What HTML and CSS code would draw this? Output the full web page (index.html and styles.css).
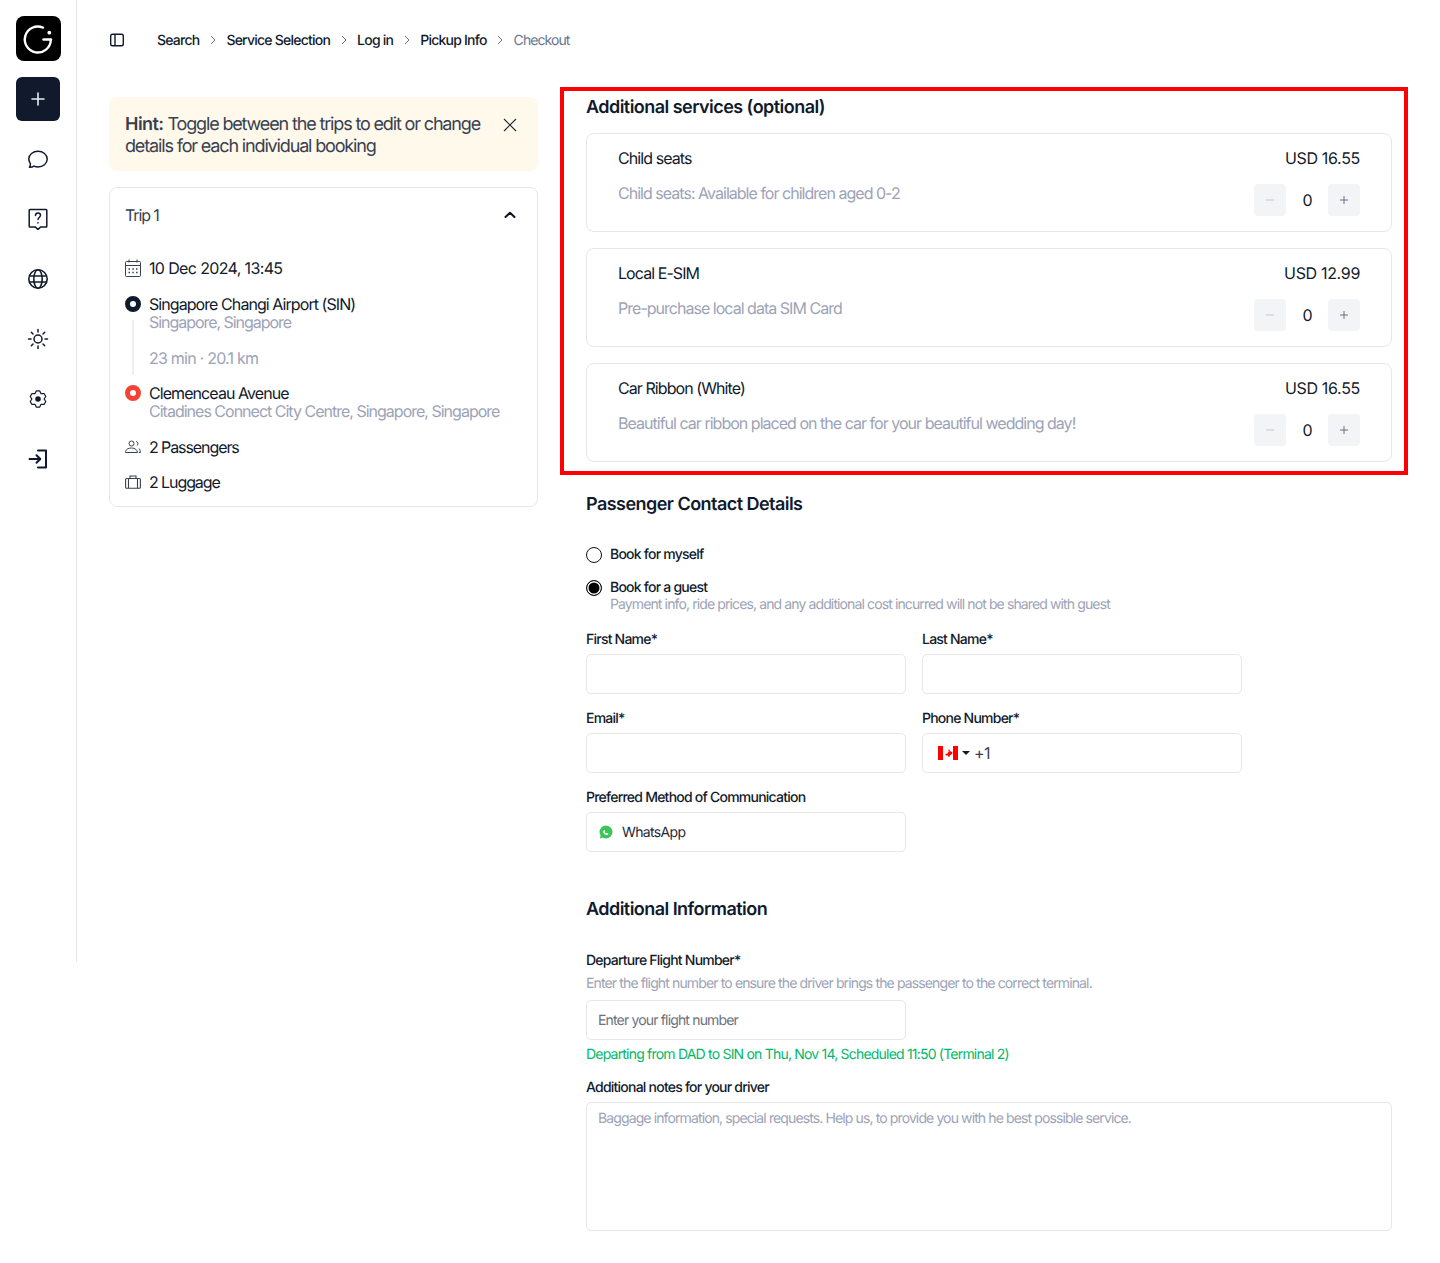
FILE: index.html
```html
<!DOCTYPE html>
<html lang="en">
<head>
<meta charset="utf-8">
<title>Checkout</title>
<link rel="stylesheet" href="styles.css">
</head>
<body>
<div class="app">
  <aside class="sidebar">
    <div class="logo"><svg width="45" height="45" viewBox="0 0 45 45" fill="none" stroke="#fff" stroke-linecap="round"><path d="M27 11.600A13 13 0 1 0 34.800 24" stroke-width="2.400"/><path d="M27.500 23.500H35" stroke-width="2.400"/><circle cx="33.300" cy="16.700" r="1.900" fill="#fff" stroke="none"/></svg></div>
    <div class="add"><svg width="16" height="16" viewBox="0 0 16 16" fill="none" stroke="#e8eaee" stroke-width="1.600" stroke-linecap="round"><path d="M8 2v12M2 8h12"/></svg></div>
    <div class="nav-icon"><svg width="22" height="22" viewBox="0 0 22 22" fill="none" stroke="#111a2c" stroke-width="1.500" stroke-linejoin="round"><path transform="translate(0 1)" d="M11 2.300c5 0 9.200 3.200 9.200 7.700 0 4.700-4.200 7.900-9.200 7.900-1.400 0-2.800-.3-4-.8-1.200.8-3 1.100-4.600 1.200.7-1.100 1.100-2.200 1-3.400C2.800 13.500 1.800 11.800 1.800 10c0-4.500 4.200-7.700 9.200-7.700z"/></svg></div>
    <div class="nav-icon"><svg width="22" height="22" viewBox="0 0 22 22" fill="none" stroke="#111a2c" stroke-width="1.500" stroke-linejoin="round" stroke-linecap="round"><path d="M3 1.500h16a.8.8 0 0 1 .8.8v16a.8.8 0 0 1-.8.8h-5.500L11 21.500l-2.500-2.400H3a.8.8 0 0 1-.8-.8v-16a.8.8 0 0 1 .8-.8z"/><path d="M8.500 7.500c0-1.500 1.100-2.500 2.500-2.500s2.500 1 2.500 2.300c0 2-2.500 2.300-2.500 4.200"/><path d="M11 14.800v.2"/></svg></div>
    <div class="nav-icon"><svg width="22" height="22" viewBox="0 0 22 22" fill="none" stroke="#111a2c" stroke-width="1.600"><circle cx="11" cy="11" r="9.200"/><ellipse cx="11" cy="11" rx="4.200" ry="9.200"/><path d="M2.300 8h17.400M2.300 14h17.400"/></svg></div>
    <div class="nav-icon"><svg width="22" height="22" viewBox="0 0 22 22" fill="none" stroke="#111a2c" stroke-width="1.500" stroke-linecap="round"><circle cx="11" cy="11" r="4"/><path d="M11 1.500v2.500M11 18v2.500M1.500 11H4M18 11h2.500M4.300 4.300 6 6M16 16l1.700 1.700M4.300 17.700 6 16M16 6l1.700-1.700"/></svg></div>
    <div class="nav-icon"><svg width="18" height="18" viewBox="0 0 22 22" fill="none" stroke="#111a2c" stroke-width="1.500" stroke-linejoin="round"><path d="M8.900 1.200h4.200l1.650 3.300 3.650-.2 2.100 3.600L18.500 11l2 3.100-2.100 3.600-3.650-.2-1.650 3.300H8.900l-1.650-3.300-3.650.2-2.100-3.600L3.500 11l-2-3.100 2.100-3.600 3.650.2z"/><circle cx="11" cy="11" r="3.400" fill="#111a2c" stroke="none"/></svg></div>
    <div class="nav-icon"><svg width="22" height="22" viewBox="0 0 22 22" fill="none" stroke="#111a2c" stroke-width="2" stroke-linecap="round" stroke-linejoin="round"><path d="M11 2.500h8v17h-8"/><path d="M2.500 11h10.500M9.500 7.200 13.300 11l-3.800 3.800"/></svg></div>
  </aside>

  <div class="main">
    <header class="topbar">
      <svg class="panel-icon" width="16" height="16" viewBox="0 0 16 16" fill="none" stroke="#111a2c" stroke-width="1.400"><rect x="1.700" y="2.200" width="12.600" height="11.600" rx="1.800"/><path d="M6 2.200v11.600"/></svg>
      <nav class="crumbs">
        <span>Search</span><svg class="sep" width="8" height="10" viewBox="0 0 8 10" fill="none" stroke="#6b7280" stroke-width="1"><path d="M2 1l4 4-4 4"/></svg>
        <span>Service Selection</span><svg class="sep" width="8" height="10" viewBox="0 0 8 10" fill="none" stroke="#6b7280" stroke-width="1"><path d="M2 1l4 4-4 4"/></svg>
        <span>Log in</span><svg class="sep" width="8" height="10" viewBox="0 0 8 10" fill="none" stroke="#6b7280" stroke-width="1"><path d="M2 1l4 4-4 4"/></svg>
        <span>Pickup Info</span><svg class="sep" width="8" height="10" viewBox="0 0 8 10" fill="none" stroke="#6b7280" stroke-width="1"><path d="M2 1l4 4-4 4"/></svg>
        <span class="current">Checkout</span>
      </nav>
    </header>

    <div class="columns">
      <div class="left">
        <div class="hint">
          <p><b>Hint:</b> Toggle between the trips to edit or change details for each individual booking</p>
          <svg class="hint-close" width="14" height="14" viewBox="0 0 14 14" fill="none" stroke="#1f2937" stroke-width="1.100"><path d="M1 1l12 12M13 1L1 13"/></svg>
        </div>
        <section class="trip">
          <div class="trip-head">
            <span>Trip 1</span>
            <svg width="12" height="8" viewBox="0 0 12 8" fill="none" stroke="#0b1222" stroke-width="2" stroke-linecap="round" stroke-linejoin="round"><path d="M1.500 6 6 1.800 10.500 6"/></svg>
          </div>
          <div class="row date">
            <svg width="16" height="18" viewBox="0 0 16 18" fill="none" stroke="#374151" stroke-width="1"><rect x=".5" y="2.500" width="15" height="15" rx="1"/><path d="M.5 6.500h15M4 .5v3M12 .5v3"/><path d="M3.500 10h1.500M7.300 10h1.500M11 10h1.500M3.500 13.500h1.500M7.300 13.500h1.500M11 13.500h1.500" stroke-width="1.300"/></svg>
            <span>10 Dec 2024, 13:45</span>
          </div>
          <div class="stop from">
            <i class="dot dark"></i>
            <div><div class="place">Singapore Changi Airport (SIN)</div><div class="sub">Singapore, Singapore</div></div>
          </div>
          <div class="leg"><span class="sub">23 min · 20.1 km</span></div>
          <div class="stop to">
            <i class="dot red"></i>
            <div><div class="place">Clemenceau Avenue</div><div class="sub">Citadines Connect City Centre, Singapore, Singapore</div></div>
          </div>
          <div class="row pax">
            <svg width="16" height="14" viewBox="0 0 16 14" fill="none" stroke="#374151" stroke-width="1"><circle cx="6.500" cy="3.500" r="2.500"/><path d="M.5 12.500c0-3 2.500-4.500 6-4.500s5.500 1.500 6 4.500z"/><path d="M11 1.500c1.200.3 2 1 2 2.200 0 .8-.5 1.500-1.200 1.900M14 8.500c.8.800 1.300 2 1.400 4h-1.500"/></svg>
            <span>2 Passengers</span>
          </div>
          <div class="row bags">
            <svg width="16" height="14" viewBox="0 0 16 14" fill="none" stroke="#374151" stroke-width="1.100"><rect x=".6" y="3.500" width="14.800" height="9.800" rx="1"/><path d="M3.500 3.500V13M12.500 3.500V13M5 3.500V1h6v2.500"/></svg>
            <span>2 Luggage</span>
          </div>
        </section>
      </div>

      <div class="right">
        <h2 class="h-services">Additional services (optional)</h2>
        <div class="services">
          <article class="service">
            <div class="service-text"><div class="s-name">Child seats</div><div class="s-desc">Child seats: Available for children aged 0-2</div></div>
            <div class="service-side"><div class="price">USD 16.55</div><div class="stepper"><button class="step off" type="button" aria-label="Decrease"><svg width="8" height="8" viewBox="0 0 8 8" stroke="currentColor"><path d="M0 4h8"/></svg></button><span>0</span><button class="step" type="button" aria-label="Increase"><svg width="8" height="8" viewBox="0 0 8 8" stroke="currentColor"><path d="M0 4h8M4 0v8"/></svg></button></div></div>
          </article>
          <article class="service">
            <div class="service-text"><div class="s-name">Local E-SIM</div><div class="s-desc">Pre-purchase local data SIM Card</div></div>
            <div class="service-side"><div class="price">USD 12.99</div><div class="stepper"><button class="step off" type="button" aria-label="Decrease"><svg width="8" height="8" viewBox="0 0 8 8" stroke="currentColor"><path d="M0 4h8"/></svg></button><span>0</span><button class="step" type="button" aria-label="Increase"><svg width="8" height="8" viewBox="0 0 8 8" stroke="currentColor"><path d="M0 4h8M4 0v8"/></svg></button></div></div>
          </article>
          <article class="service">
            <div class="service-text"><div class="s-name">Car Ribbon (White)</div><div class="s-desc">Beautiful car ribbon placed on the car for your beautiful wedding day!</div></div>
            <div class="service-side"><div class="price">USD 16.55</div><div class="stepper"><button class="step off" type="button" aria-label="Decrease"><svg width="8" height="8" viewBox="0 0 8 8" stroke="currentColor"><path d="M0 4h8"/></svg></button><span>0</span><button class="step" type="button" aria-label="Increase"><svg width="8" height="8" viewBox="0 0 8 8" stroke="currentColor"><path d="M0 4h8M4 0v8"/></svg></button></div></div>
          </article>
        </div>

        <h2 class="h-contact">Passenger Contact Details</h2>
        <label class="radio r1"><i class="radio-mark"></i><span>Book for myself</span></label>
        <label class="radio r2"><i class="radio-mark on"></i><span>Book for a guest</span></label>
        <p class="radio-note">Payment info, ride prices, and any additional cost incurred will not be shared with guest</p>

        <div class="form-grid">
          <div class="field"><div class="label">First Name*</div><div class="input"></div></div>
          <div class="field"><div class="label">Last Name*</div><div class="input"></div></div>
          <div class="field"><div class="label">Email*</div><div class="input"></div></div>
          <div class="field"><div class="label">Phone Number*</div>
            <div class="input phone">
              <svg width="20" height="14" viewBox="0 0 20 14"><rect width="20" height="14" fill="#fff"/><rect width="5" height="14" fill="#f00"/><rect x="15" width="5" height="14" fill="#f00"/><path d="M10 2.500l.9 1.600 1-.4-.3 2 1.300-.8.4 1 1.200-.2-.5 1.400.5.400-2.700 2 .2 1h-2v-1L7.300 9.500l.5-.4-.5-1.400 1.200.2.400-1 1.300.8-.3-2 1 .4z" fill="#f00"/></svg>
              <i class="caret"></i><span>+1</span>
            </div>
          </div>
          <div class="field"><div class="label">Preferred Method of Communication</div>
            <div class="input wa">
              <svg width="14" height="14" viewBox="0 0 14 14"><circle cx="7" cy="7" r="6.500" fill="#3cc45a"/><path d="M.8 13.400l1-3.600 2.500 2.500z" fill="#3cc45a"/><path d="M4.200 7.600c.7 1.300 1.600 2 3 2.500.8.200 2-.3 2.300-1.300L8 8l-.7.600C6.600 8.300 6 7.700 5.700 7l.6-.7-.7-1.600c-1 .3-1.600 1.500-1.400 2.900z" fill="#fff"/></svg>
              <span>WhatsApp</span>
            </div>
          </div>
        </div>

        <h2 class="h-info">Additional Information</h2>
        <div class="label flight-label">Departure Flight Number*</div>
        <p class="help">Enter the flight number to ensure the driver brings the passenger to the correct terminal.</p>
        <div class="input flight"><span>Enter your flight number</span></div>
        <p class="status">Departing from DAD to SIN on Thu, Nov 14, Scheduled 11:50 (Terminal 2)</p>
        <div class="label notes-label">Additional notes for your driver</div>
        <div class="notes">Baggage information, special requests. Help us, to provide you with he best possible service.</div>
      </div>
    </div>
  </div>
</div>
<div class="highlight"></div>
</body>
</html>
```

FILE: styles.css
```css
* { box-sizing: border-box; }
html, body { margin: 0; padding: 0; }
body {
  position: relative;
  height: 1263px;
  overflow: hidden;
  background: #fff;
  color: #111a2c;
  font-family: Inter, "Liberation Sans", sans-serif;
  font-size: 16px;
  letter-spacing: -0.058em;
  text-rendering: geometricPrecision;
}
p, h2 { margin: 0; }
.app { display: flex; align-items: flex-start; }

.sidebar {
  flex: 0 0 77px;
  height: 962px;
  border-right: 1px solid #e5e7eb;
  padding-top: 16px;
  display: flex;
  flex-direction: column;
  align-items: flex-start;
}
.logo { width: 45px; height: 45px; margin-left: 16px; background: #000; border-radius: 8px; }
.logo svg { display: block; }
.add {
  width: 44px; height: 44px; margin: 16px 0 0 16px;
  background: #111a2c; border-radius: 6px;
  display: flex; align-items: center; justify-content: center;
}
.nav-icon {
  width: 44px; height: 60px; margin-left: 16px;
  display: flex; align-items: center; justify-content: center;
}
.add + .nav-icon { margin-top: 8px; }

.main { flex: 1; min-width: 0; padding: 0 48px 0 32px; }
.topbar { height: 80px; display: flex; align-items: center; }
.panel-icon { flex: none; }
.crumbs { margin-left: 32px; padding-top: 2px; display: flex; align-items: center; font-size: 14px; font-weight: 500; line-height: 20px; letter-spacing: -0.055em; color: #111a2c; }
.sep { margin: 0 9.5px 2px; }
.current { color: #6b7691; font-weight: 400; letter-spacing: -0.066em; }

.columns { display: flex; gap: 48px; align-items: flex-start; }
.left { flex: 0 0 429px; padding-top: 17px; }
.right { flex: 1; min-width: 0; padding-top: 17px; }

.hint {
  height: 74px; padding: 17px 20px 0 16px;
  background: #fff9eb; border-radius: 8px;
  display: flex; justify-content: space-between; align-items: flex-start;
}
.hint p { width: 365px; font-size: 18px; line-height: 22px; letter-spacing: -0.064em; color: #374151; }
.hint b { font-weight: 600; letter-spacing: -0.03em; }
.hint-close { margin: 4px 1px 0 0; flex: none; }

.trip {
  margin-top: 16px; height: 320px; padding: 0 15px;
  border: 1px solid #e5e7eb; border-radius: 8px;
  font-size: 16px;
}
.trip-head { height: 54px; display: flex; justify-content: space-between; align-items: center; padding-right: 6px; letter-spacing: -0.07em; color: #374151; }
.row { display: flex; align-items: center; gap: 8px; line-height: 20px; }
.row svg { flex: none; }
.date { margin-top: 16px; letter-spacing: -0.04em; }
.stop { display: flex; gap: 8px; line-height: 18px; }
.from { margin-top: 17px; }
.from .sub { letter-spacing: -0.065em; }
.to { margin-top: 9px; }
.to .sub { letter-spacing: -0.062em; }
.dot { flex: none; width: 16px; height: 16px; margin-top: 1px; border-radius: 50%; background: #fff; border: 5px solid #111a2c; }
.dot.red { border-color: #f44336; }
.sub { color: #9ca3b7; }
.leg { margin: -11px 0 0 7px; padding: 29px 0 7px 15px; border-left: 2px solid #eceef1; line-height: 19px; letter-spacing: -0.048em; }
.pax { margin-top: 17px; letter-spacing: -0.068em; }
.bags { margin-top: 15px; letter-spacing: -0.068em; }

.h-services { font-size: 18px; line-height: 22px; font-weight: 600; letter-spacing: -0.03em; color: #111a2c; }
.services { margin-top: 14px; display: flex; flex-direction: column; gap: 16px; }
.service {
  height: 99px; padding: 14px 31px;
  border: 1px solid #e5e7eb; border-radius: 8px;
  display: flex; justify-content: space-between;
}
.s-name { font-size: 16px; line-height: 20px; }
.s-desc { margin-top: 15px; font-size: 16px; line-height: 20px; letter-spacing: -0.061em; color: #9ca3b7; }
.service-side { display: flex; flex-direction: column; align-items: flex-end; }
.price { font-size: 16px; line-height: 20px; letter-spacing: -0.02em; }
.stepper { margin-top: 16px; display: flex; align-items: center; }
.stepper span { width: 42px; text-align: center; font-size: 16px; }
.step {
  width: 32px; height: 32px; padding: 0; border: 0; border-radius: 4px;
  background: #f3f4f6; color: #6b7280;
  display: flex; align-items: center; justify-content: center;
}
.step.off { color: #c2c6cf; }

.h-contact { margin-top: 33px; font-size: 18px; line-height: 20px; font-weight: 600; letter-spacing: -0.03em; }
.radio { display: flex; align-items: center; gap: 8px; font-size: 14px; font-weight: 500; line-height: 17px; letter-spacing: -0.055em; }
.r1 { margin-top: 31px; }
.r2 { margin-top: 16px; }
.radio-mark { flex: none; width: 16px; height: 16px; border-radius: 50%; border: 1px solid #111; background: #fff; }
.radio-mark.on { background: #000; box-shadow: inset 0 0 0 1.500px #fff; }
.radio-note { margin: 0 0 0 24px; font-size: 14px; line-height: 17px; letter-spacing: -0.063em; color: #9ca3b7; }

.form-grid { margin-top: 18px; width: 656px; display: grid; grid-template-columns: 320px 320px; column-gap: 16px; row-gap: 16px; }
.label { font-size: 14px; font-weight: 500; line-height: 17px; letter-spacing: -0.055em; }
.input {
  margin-top: 6px; height: 40px; width: 320px;
  border: 1px solid #e5e7eb; border-radius: 5px;
  font-size: 14px;
  display: flex; align-items: center;
}
.phone { padding-left: 15px; font-size: 16px; letter-spacing: -0.03em; color: #374151; }
.caret { margin: 0 4px; width: 0; height: 0; border: 4px solid transparent; border-top: 4px solid #111a2c; border-bottom: 0; }
.wa { padding-left: 12px; gap: 9px; letter-spacing: -0.047em; color: #1f2937; }

.h-info { margin-top: 48px; font-size: 18px; line-height: 20px; font-weight: 600; letter-spacing: -0.03em; }
.flight-label { margin-top: 32px; }
.help { margin-top: 6px; font-size: 14px; line-height: 17px; letter-spacing: -0.062em; color: #9ca3b7; }
.flight { margin-top: 8px; padding-left: 11px; letter-spacing: -0.06em; color: #6b7280; }
.status { margin-top: 6px; font-size: 14px; line-height: 17px; letter-spacing: -0.057em; color: #00b86b; }
.notes-label { margin-top: 16px; }
.notes {
  margin-top: 6px; height: 129px; padding: 7px 11px;
  border: 1px solid #e5e7eb; border-radius: 5px;
  font-size: 14px; line-height: 17px; letter-spacing: -0.063em; color: #9ca3b7;
}

.highlight {
  position: absolute; left: 560px; top: 87px; width: 848px; height: 388px;
  border: 4px solid #f00; pointer-events: none;
}
```
